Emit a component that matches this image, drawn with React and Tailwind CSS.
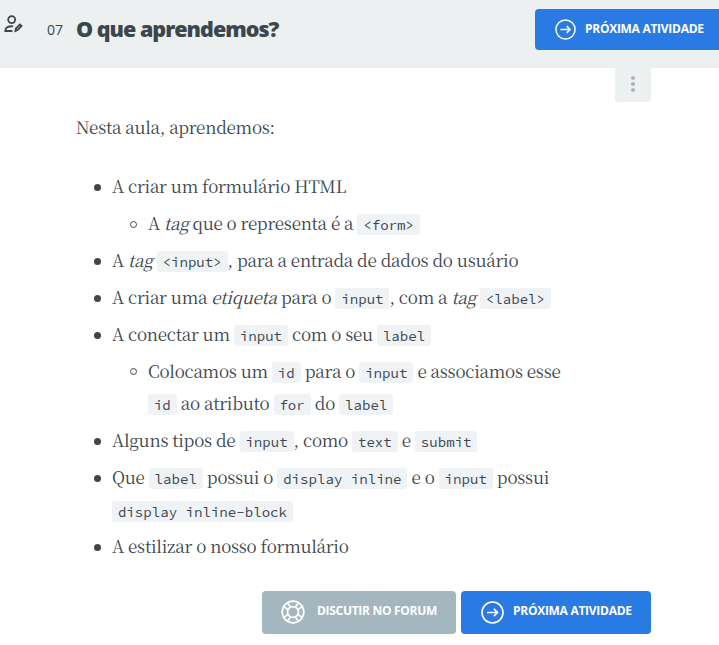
import React from "react";

function Code({ children }) {
  return (
    <code className="inline-block h-[21px] rounded-[3px] bg-[#eff3f6] px-[5.9px] align-baseline font-['Source_Code_Pro','Noto_Sans_Mono_CJK_SC','DejaVu_Sans_Mono',monospace] text-[14.1px] leading-[23px] tracking-normal whitespace-pre">
      {children}
    </code>
  );
}

function Em({ children }) {
  return <em className="italic">{children}</em>;
}

function Item({ sub, children }) {
  return (
    <li className={sub ? "mb-[4.5px] ml-9 flex" : "mb-[4.5px] flex"}>
      <span
        className={
          sub
            ? "mt-[13.5px] mr-[11.5px] ml-[17.5px] size-[7px] shrink-0 rounded-full border border-[#3d464d]"
            : "mt-[14px] mr-[11.5px] ml-[17.5px] size-[7px] shrink-0 rounded-full bg-[#3d464d]"
        }
      />
      <div className="whitespace-nowrap">{children}</div>
    </li>
  );
}

function ArrowCircle({ className }) {
  return (
    <svg className={className} viewBox="0 0 23 23" fill="none" stroke="currentColor" strokeWidth="1.6">
      <circle cx="11.5" cy="11.5" r="10.5" />
      <path d="M6 11.5h10.5M12.8 7.8l3.7 3.7-3.7 3.7" />
    </svg>
  );
}

function Buoy() {
  return (
    <svg className="size-[24px] shrink-0" viewBox="0 0 24 24" fill="none" stroke="currentColor" strokeWidth="1.7">
      <circle cx="12" cy="12" r="10.8" />
      <circle cx="12" cy="12" r="5.4" />
      <path d="M6.6 2.9 9.8 7.2M2.9 6.6l4.3 3.2M17.4 2.9l-3.2 4.3M21.1 6.6l-4.3 3.2M6.6 21.1l3.2-4.3M2.9 17.4l4.3-3.2M17.4 21.1l-3.2-4.3M21.1 17.4l-4.3-3.2" />
    </svg>
  );
}

export default function App() {
  return (
    <div className="h-[645px] w-[719px] overflow-hidden bg-white font-['Open_Sans',sans-serif] text-[#3d464d]">
      <header className="flex h-[68px] bg-[#ecf0f1]">
        <svg className="mt-[14px] ml-[3px] size-[20px] shrink-0" viewBox="0 0 20 20" fill="none" stroke="currentColor" strokeWidth="1.8">
          <circle cx="8.7" cy="5.6" r="3.5" />
          <path d="M9.4 17H2.3c0-3.4 2.4-5 7.8-4.7" />
          <path d="m12.4 17 .5-2.6 4-4 1.7 1.7-4 4z" fill="currentColor" fillOpacity="0.35" />
        </svg>
        <span className="mt-[20px] ml-[24px] w-[29px] shrink-0 text-[14px] leading-5">07</span>
        <h1 className="mt-[14px] w-[459px] shrink-0 text-[21.5px] leading-[30px] font-extrabold tracking-[-0.98px] whitespace-nowrap">
          O que aprendemos?
        </h1>
        <button className="mt-[9px] flex h-[41px] w-[184px] shrink-0 items-center rounded-l-[4px] bg-[#2a7ae4] pl-[20px] text-white">
          <ArrowCircle className="size-[21px] shrink-0" />
          <span className="mb-[2px] ml-[9px] text-[12px] font-bold tracking-[-0.28px] whitespace-nowrap">PRÓXIMA ATIVIDADE</span>
        </button>
      </header>
      <div className="ml-[615px] flex h-[34px] w-[36px] flex-col items-center justify-center gap-[2px] rounded-b-[3px] bg-[#ecf0f1] pb-[2px]">
        <i className="size-[4px] rounded-full bg-[#a4b7bf]" />
        <i className="size-[4px] rounded-full bg-[#a4b7bf]" />
        <i className="size-[4px] rounded-full bg-[#a4b7bf]" />
      </div>
      <main className="mt-[9px] ml-[76px] w-[575px] font-['Source_Serif_Pro','Noto_Serif_CJK_SC','Liberation_Serif',serif] text-[17px] leading-[32.4px] tracking-[-0.25px]">
        <p>Nesta aula, aprendemos:</p>
        <ul className="mt-[27px]">
          <Item>A criar um formulário HTML</Item>
          <Item sub>A <Em>tag</Em> que o representa é a <Code>{"<form>"}</Code></Item>
          <Item>A <Em>tag</Em> <Code>{"<input>"}</Code>, para a entrada de dados do usuário</Item>
          <Item>A criar uma <Em>etiqueta</Em> para o <Code>input</Code>, com a <Em>tag</Em> <Code>{"<label>"}</Code></Item>
          <Item>A conectar um <Code>input</Code> com o seu <Code>label</Code></Item>
          <Item sub>Colocamos um <Code>id</Code> para o <Code>input</Code> e associamos esse<br /><Code>id</Code> ao atributo <Code>for</Code> do <Code>label</Code></Item>
          <Item>Alguns tipos de <Code>input</Code>, como <Code>text</Code> e <Code>submit</Code></Item>
          <Item>Que <Code>label</Code> possui o <Code>display inline</Code> e o <Code>input</Code> possui<br /><Code>display inline-block</Code></Item>
          <Item>A estilizar o nosso formulário</Item>
        </ul>
      </main>
      <footer className="mt-[28px] ml-[262px] flex gap-[5px] text-[12px] font-bold text-white">
        <button className="flex h-[43px] w-[194px] items-center rounded-[4px] bg-[#a4b7bf] pl-[19px]">
          <Buoy />
          <span className="mb-[2px] ml-[12px] tracking-[-0.3px] whitespace-nowrap">DISCUTIR NO FORUM</span>
        </button>
        <button className="flex h-[43px] w-[190px] items-center rounded-[4px] bg-[#2a7ae4] pl-[20px]">
          <ArrowCircle className="size-[23px] shrink-0" />
          <span className="mb-[2px] ml-[9px] tracking-[-0.28px] whitespace-nowrap">PRÓXIMA ATIVIDADE</span>
        </button>
      </footer>
    </div>
  );
}
